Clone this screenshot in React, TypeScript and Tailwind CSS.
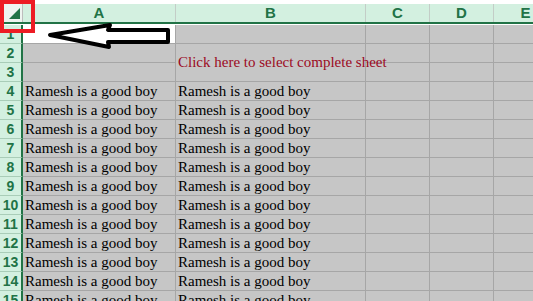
const COLS = [
  { key: 'A', w: 'w-[153px]' },
  { key: 'B', w: 'w-[190px]' },
  { key: 'C', w: 'w-[64px]' },
  { key: 'D', w: 'w-[64px]' },
  { key: 'E', w: 'w-[64px]' },
];

const TEXT = 'Ramesh is a good boy';

function RowHeader({ n }: { n: number }) {
  return (
    <div className="w-[23px] shrink-0 h-full bg-[#d3f0e0] border-r-2 border-r-[#217346] border-b border-b-[#a9cdb8] flex items-center justify-center text-[#217346] font-bold text-[14px] leading-none">
      {n}
    </div>
  );
}

function Cell({ w, white, children }: { w: string; white?: boolean; children?: React.ReactNode }) {
  return (
    <div
      className={`${w} shrink-0 h-full border-r border-b border-[#a6a6a6] flex items-center pl-[2px] overflow-visible whitespace-nowrap ${
        white ? 'bg-white' : 'bg-[#c6c6c6]'
      }`}
    >
      {children}
    </div>
  );
}

export default function App() {
  const rows = Array.from({ length: 15 }, (_, i) => i + 1);
  return (
    <div className="relative w-[533px] h-[301px] overflow-hidden bg-white font-['Liberation_Serif',serif]">
      <div className="pt-[4px]">
        {/* column headers */}
        <div className="flex h-[20px] border-b-2 border-[#217346] bg-[#d3f0e0]">
          <div className="w-[23px] shrink-0 h-full bg-[#eef4f0] border-r border-[#bdbdbd] relative">
            <div className="absolute left-[9px] top-[4px] w-0 h-0 border-l-[11px] border-l-transparent border-b-[11px] border-b-[#217346]" />
          </div>
          {COLS.map((c) => (
            <div
              key={c.key}
              className={`${c.w} shrink-0 h-full border-r border-[#c3cdc7] flex items-center justify-center text-[#217346] font-bold text-[15px] font-['Liberation_Sans',sans-serif]`}
            >
              {c.key}
            </div>
          ))}
        </div>
        <div className="h-[1px]" />
        {/* rows */}
        {rows.map((n) => (
          <div key={n} className="flex h-[19px] font-['Liberation_Sans',sans-serif]">
            <RowHeader n={n} />
            {n === 2 || n === 3 ? (
              <>
                <Cell w={COLS[0].w} />
                {n === 2 ? (
                  <div className={`${COLS[1].w} shrink-0 h-[38px] relative z-10 border-r border-b border-[#a6a6a6] bg-[#c6c6c6] flex items-center pl-[2px] whitespace-nowrap text-[15px] text-[#9c0a1e] font-['Liberation_Serif',serif]`}>
                    Click here to select complete sheet
                  </div>
                ) : (
                  <div className={`${COLS[1].w} shrink-0`} />
                )}
              </>
            ) : (
              <>
                <Cell w={COLS[0].w} white={n === 1}>
                  {n > 3 && <span className="text-[15px] text-black font-['Liberation_Serif',serif]">{TEXT}</span>}
                </Cell>
                <Cell w={COLS[1].w}>
                  {n > 3 && <span className="text-[15px] text-black font-['Liberation_Serif',serif]">{TEXT}</span>}
                </Cell>
              </>
            )}
            <Cell w={COLS[2].w} />
            <Cell w={COLS[3].w} />
            <Cell w={COLS[4].w} />
          </div>
        ))}
      </div>

      {/* red highlight box around select-all corner */}
      <div className="absolute left-0 top-0 w-[35px] h-[33px] border-4 border-[#ed1c24]" />

      {/* hand drawn arrow */}
      <svg className="absolute left-0 top-0 pointer-events-none" width="533" height="301">
        <polygon
          points="50,35 110,25 108,30 168,30 168,42 108,42 109,47"
          fill="white"
          stroke="black"
          strokeWidth="4"
          strokeLinejoin="round"
        />
      </svg>
    </div>
  );
}
